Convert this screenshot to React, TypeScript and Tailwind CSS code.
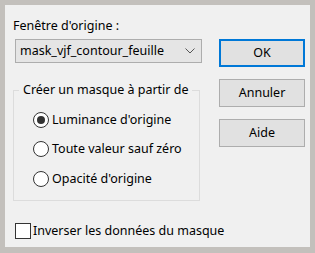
import React from "react";

function Radio({ label, checked }: { label: string; checked?: boolean }) {
  return (
    <div className="flex items-center h-[29.5px]">
      <span className="w-[16px] h-[16px] rounded-full border border-[#333] bg-white flex items-center justify-center">
        {checked && <span className="w-[8px] h-[8px] rounded-full bg-[#333]" />}
      </span>
      <span className="ml-[3px]">{label}</span>
    </div>
  );
}

function Button({ label, primary }: { label: string; primary?: boolean }) {
  return (
    <button
      className={
        "w-[86px] h-[28px] bg-[#e1e1e1] text-black " +
        (primary ? "border-2 border-[#0078d7]" : "border border-[#adadad]")
      }
    >
      {label}
    </button>
  );
}

export default function App() {
  return (
    <div
      className="w-[315px] h-[253px] bg-[#c3c0bc] pt-[5px] pl-[5px] pr-[5px] pb-[6px] text-[12.5px] leading-[16px] text-black"
      style={{ fontFamily: '"Noto Sans", sans-serif' }}
    >
      <div className="h-full bg-[#f0f0f0] flex flex-col">
        <div className="flex">
          {/* left column */}
          <div className="ml-[8px] w-[194px] pt-[13px]">
            <div>Fenêtre d'origine :</div>
            <div className="ml-[2px] mt-[5px] w-[187px] h-[24px] bg-[#e5e5e5] border border-[#adadad] flex items-center justify-between pl-[4px] pr-[6px]">
              <span>mask_vjf_contour_feuille</span>
              <svg width="10" height="6" viewBox="0 0 10 6" fill="none">
                <path d="M0.5 0.5 L5 5 L9.5 0.5" stroke="#555" strokeWidth="1" />
              </svg>
            </div>
            <div className="relative mt-[27px] w-[187px] h-[111px] border border-[#dcdcdc] pl-[19px] pt-[14px]">
              <span className="absolute -top-[9px] left-[5px] px-[4px] bg-[#f0f0f0]">
                Créer un masque à partir de
              </span>
              <Radio label="Luminance d'origine" checked />
              <Radio label="Toute valeur sauf zéro" />
              <Radio label="Opacité d'origine" />
            </div>
          </div>
          {/* buttons */}
          <div className="ml-[12px] pt-[34px] flex flex-col gap-[12px]">
            <Button label="OK" primary />
            <Button label="Annuler" />
            <Button label="Aide" />
          </div>
        </div>
        <div className="flex items-center ml-[10px] mt-[22px]">
          <span className="w-[16px] h-[16px] border border-[#333] bg-white" />
          <span className="ml-[2px]">Inverser les données du masque</span>
        </div>
      </div>
    </div>
  );
}
